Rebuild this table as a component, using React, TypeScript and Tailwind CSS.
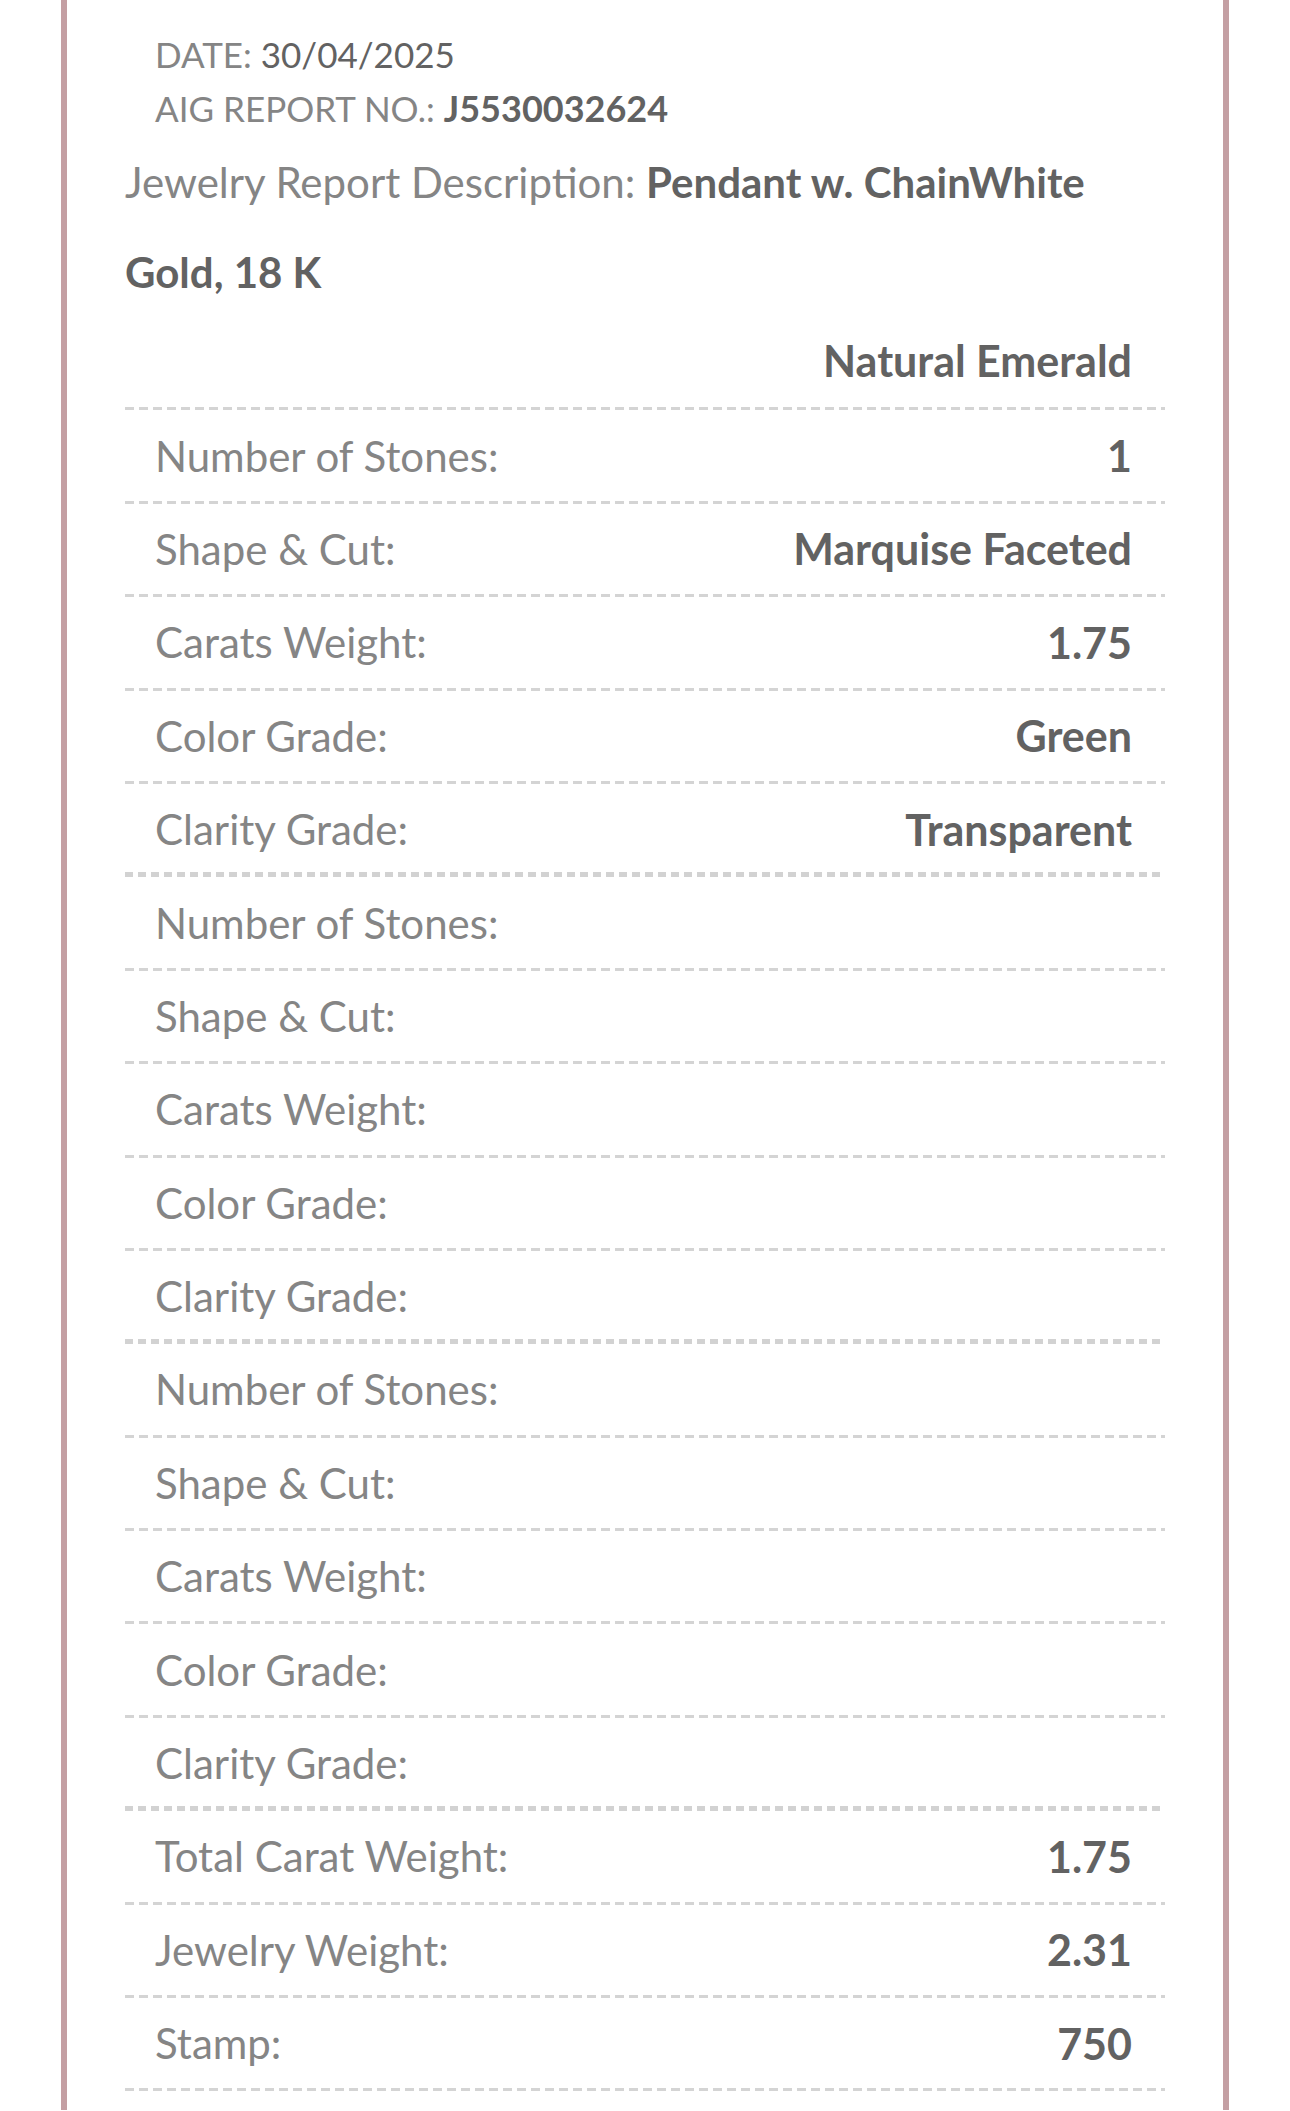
import React from 'react';

type Row = { label: string; value?: string };

const stoneOne: Row[] = [
  { label: 'Number of Stones:', value: '1' },
  { label: 'Shape & Cut:', value: 'Marquise Faceted' },
  { label: 'Carats Weight:', value: '1.75' },
  { label: 'Color Grade:', value: 'Green' },
  { label: 'Clarity Grade:', value: 'Transparent' },
];

const emptyStone: Row[] = [
  { label: 'Number of Stones:' },
  { label: 'Shape & Cut:' },
  { label: 'Carats Weight:' },
  { label: 'Color Grade:' },
  { label: 'Clarity Grade:' },
];

const totals: Row[] = [
  { label: 'Total Carat Weight:', value: '1.75' },
  { label: 'Jewelry Weight:', value: '2.31' },
  { label: 'Stamp:', value: '750' },
];

const Dashes = ({ thick = false }: { thick?: boolean }) =>
  thick ? (
    <div className="h-[5px] -mt-[2px] bg-[repeating-linear-gradient(90deg,#d2d2d2_0_8px,transparent_8px_13px)]" />
  ) : (
    <div className="h-[3px] bg-[repeating-linear-gradient(90deg,#d4d4d4_0_9px,transparent_9px_14px)]" />
  );

const ReportRow = ({ label, value }: Row) => (
  <div className="flex h-[90.4px] items-center justify-between pl-[30px] pr-[33px] leading-none">
    <span className="text-[42px] text-[#858585]">{label}</span>
    {value && <span className="text-[43px] font-bold text-[#626262]">{value}</span>}
  </div>
);

const StoneBlock = ({ rows }: { rows: Row[] }) => (
  <div>
    {rows.map((r, i) => (
      <React.Fragment key={i}>
        <ReportRow {...r} />
        <Dashes thick={i === rows.length - 1} />
      </React.Fragment>
    ))}
  </div>
);

export default function App() {
  return (
    <div className="min-h-screen bg-white px-[61px] font-['Lato',sans-serif]">
      <div className="border-x-[6px] border-[#c49fa3] px-[58px] pt-[27px] pb-[19px]">
        <div className="pl-[30px] text-[35px] leading-[54px] text-[#858585]">
          <div>
            DATE: <span className="text-[#626262]">30/04/2025</span>
          </div>
          <div>
            AIG REPORT NO.: <span className="text-[36px] font-bold text-[#626262]">J5530032624</span>
          </div>
        </div>

        <p className="mt-[2px] text-[42px] leading-[90px] text-[#858585]">
          Jewelry Report Description:{' '}
          <span className="font-bold text-[#626262]">Pendant w. ChainWhite Gold, 18 K</span>
        </p>

        <div className="flex h-[90.4px] items-center justify-end pr-[33px] leading-none">
          <span className="-mt-[4px] text-[43px] font-bold text-[#626262]">Natural Emerald</span>
        </div>
        <Dashes />

        <StoneBlock rows={stoneOne} />
        <StoneBlock rows={emptyStone} />
        <StoneBlock rows={emptyStone} />

        {totals.map((r, i) => (
          <React.Fragment key={i}>
            <ReportRow {...r} />
            <Dashes />
          </React.Fragment>
        ))}
      </div>
    </div>
  );
}
